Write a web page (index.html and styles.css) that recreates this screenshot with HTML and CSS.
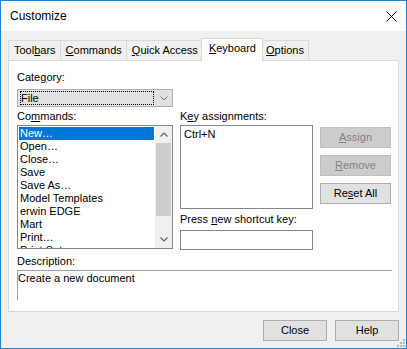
FILE: index.html
```html
<!DOCTYPE html>
<html lang="en">
<head>
    <meta charset="UTF-8">
    <title>Customize</title>
    <link rel="stylesheet" href="styles.css">
</head>
<body>
    <div class="window">
        <div class="titlebar">
            <span class="title">Customize</span>
            <svg class="close-icon" width="11" height="11" viewBox="0 0 11 11">
                <path d="M0.5 0.5 L10.5 10.5 M10.5 0.5 L0.5 10.5" stroke="#000" stroke-width="1" fill="none"/>
            </svg>
        </div>

        <div class="client">
            <div class="tabs">
                <div class="tab first">Tool<u>b</u>ars</div>
                <div class="tab"><u>C</u>ommands</div>
                <div class="tab"><u>Q</u>uick Access</div>
                <div class="tab active"><u>K</u>eyboard</div>
                <div class="tab"><u>O</u>ptions</div>
            </div>

            <div class="panel">
                <div class="label">Cate<u>g</u>ory:</div>
                <div class="combo">
                    <div class="combo-value">File</div>
                    <svg class="combo-arrow" width="8" height="5" viewBox="0 0 8 5">
                        <path d="M0.5 0.5 L4 4 L7.5 0.5" stroke="#707070" stroke-width="1" fill="none"/>
                    </svg>
                </div>

                <div class="main">
                    <div class="col">
                        <div class="label">Co<u>m</u>mands:</div>
                        <div class="listbox">
                            <div class="items">
                                <div class="item selected">New…</div>
                                <div class="item">Open…</div>
                                <div class="item">Close…</div>
                                <div class="item">Save</div>
                                <div class="item">Save As…</div>
                                <div class="item">Model Templates</div>
                                <div class="item">erwin EDGE</div>
                                <div class="item">Mart</div>
                                <div class="item">Print…</div>
                                <div class="item">Print Setup…</div>
                            </div>
                            <div class="scrollbar">
                                <div class="sb-btn">
                                    <svg width="8" height="5" viewBox="0 0 8 5"><path d="M0.5 4.5 L4 1 L7.5 4.5" stroke="#606060" stroke-width="1.2" fill="none"/></svg>
                                </div>
                                <div class="sb-thumb"></div>
                                <div class="sb-track"></div>
                                <div class="sb-btn">
                                    <svg width="8" height="5" viewBox="0 0 8 5"><path d="M0.5 0.5 L4 4 L7.5 0.5" stroke="#606060" stroke-width="1.2" fill="none"/></svg>
                                </div>
                            </div>
                        </div>
                    </div>

                    <div class="col">
                        <div class="label">K<u>e</u>y assignments:</div>
                        <div class="keybox">Ctrl+N</div>
                        <div class="label shortcut-label">Press <u>n</u>ew shortcut key:</div>
                        <div class="textbox"></div>
                    </div>

                    <div class="col buttons">
                        <button class="btn" disabled><u>A</u>ssign</button>
                        <button class="btn" disabled><u>R</u>emove</button>
                        <button class="btn">Re<u>s</u>et All</button>
                    </div>
                </div>

                <div class="label desc-label">Description:</div>
                <div class="desc">Create a new document</div>
            </div>

            <div class="footer">
                <button class="btn wide">Close</button>
                <button class="btn wide">Help</button>
            </div>
        </div>

        <svg class="grip" width="8" height="8" viewBox="0 0 8 8">
            <rect x="6" y="0" width="2" height="2" fill="#b8b8b8"/>
            <rect x="3" y="3" width="2" height="2" fill="#b8b8b8"/>
            <rect x="6" y="3" width="2" height="2" fill="#b8b8b8"/>
            <rect x="0" y="6" width="2" height="2" fill="#b8b8b8"/>
            <rect x="3" y="6" width="2" height="2" fill="#b8b8b8"/>
            <rect x="6" y="6" width="2" height="2" fill="#b8b8b8"/>
        </svg>
    </div>
</body>
</html>
```

FILE: styles.css
```css
* {
    box-sizing: border-box;
}

body {
    margin: 0;
    font: 11px/13px "Liberation Sans", Arial, sans-serif;
    color: #000;
    background: #fff;
}

.window {
    position: relative;
    width: 407px;
    height: 349px;
    border: 1px solid #1883d7;
    background: #f0f0f0;
    display: flex;
    flex-direction: column;
}

.titlebar {
    height: 30px;
    background: #fff;
    display: flex;
    align-items: center;
    padding: 0 9px;
}

.title {
    flex: 1;
    font-size: 12px;
}

.client {
    flex: 1;
    padding: 7px 7px 0 7px;
}

/* tabs */
.tabs {
    display: flex;
    align-items: flex-end;
    height: 22px;
}

.tab {
    height: 20px;
    line-height: 18px;
    padding: 0 4px 0 5px;
    margin-left: -1px;
    border: 1px solid #d9d9d9;
    border-bottom: none;
    background: #f0f0f0;
}

.tab.first {
    margin-left: 0;
}

.tab.active {
    position: relative;
    z-index: 1;
    height: 23px;
    line-height: 18px;
    margin: 0 -2px -1px -2px;
    padding: 0 6px 0 7px;
    background: #fff;
}

.panel {
    height: 252px;
    background: #fff;
    border: 1px solid #d9d9d9;
    padding: 10px 6px 0 8px;
}

.label {
    height: 13px;
    white-space: nowrap;
}

/* combo */
.combo {
    width: 156px;
    height: 18px;
    margin-top: 5px;
    padding: 1px 2px;
    border: 1px solid #adadad;
    background: #e1e1e1;
    display: flex;
    align-items: center;
}

.combo-value {
    width: 134px;
    height: 14px;
    line-height: 12px;
    border: 1px dotted #000;
}

.combo-arrow {
    margin-left: 6px;
}

.main {
    display: grid;
    grid-template-columns: 156px 133px 71px;
    column-gap: 7px;
    margin-top: 3px;
}

.col .label + * {
    margin-top: 2px;
}

/* list */
.listbox {
    height: 124px;
    border: 1px solid #828790;
    display: flex;
}

.items {
    flex: 1;
    overflow: hidden;
    padding: 1px;
}

.item {
    height: 13px;
    padding-left: 1px;
    white-space: nowrap;
}

.item.selected {
    background: #0078d7;
    color: #fff;
}

.scrollbar {
    width: 17px;
    display: flex;
    flex-direction: column;
    background: #f0f0f0;
}

.sb-btn {
    height: 17px;
    display: flex;
    align-items: center;
    justify-content: center;
}

.sb-thumb {
    height: 73px;
    margin: 0 1px;
    background: #cdcdcd;
}

.sb-track {
    flex: 1;
}

.keybox {
    height: 84px;
    border: 1px solid #828790;
    padding: 2px 3px;
}

.shortcut-label {
    margin-top: 4px;
}

.col .textbox {
    height: 20px;
    margin-top: 4px;
    border: 1px solid #828790;
}

/* buttons */
.buttons {
    display: flex;
    flex-direction: column;
    gap: 7px;
    padding-top: 17px;
}

.btn {
    height: 21px;
    padding: 0;
    border: 1px solid #adadad;
    background: #e1e1e1;
    font: inherit;
    color: #000;
}

.btn:disabled {
    background: #cccccc;
    border-color: #bfbfbf;
    color: #838383;
}

.desc-label {
    margin-top: 5px;
}

.desc {
    height: 30px;
    margin-top: 2px;
    border-top: 1px solid #a0a0a0;
    border-left: 1px solid #a0a0a0;
    padding: 1px 0 0 0;
}

.footer {
    display: flex;
    justify-content: flex-end;
    gap: 8px;
    padding-top: 8px;
}

.btn.wide {
    width: 64px;
}

.grip {
    position: absolute;
    right: 1px;
    bottom: 1px;
}
```
